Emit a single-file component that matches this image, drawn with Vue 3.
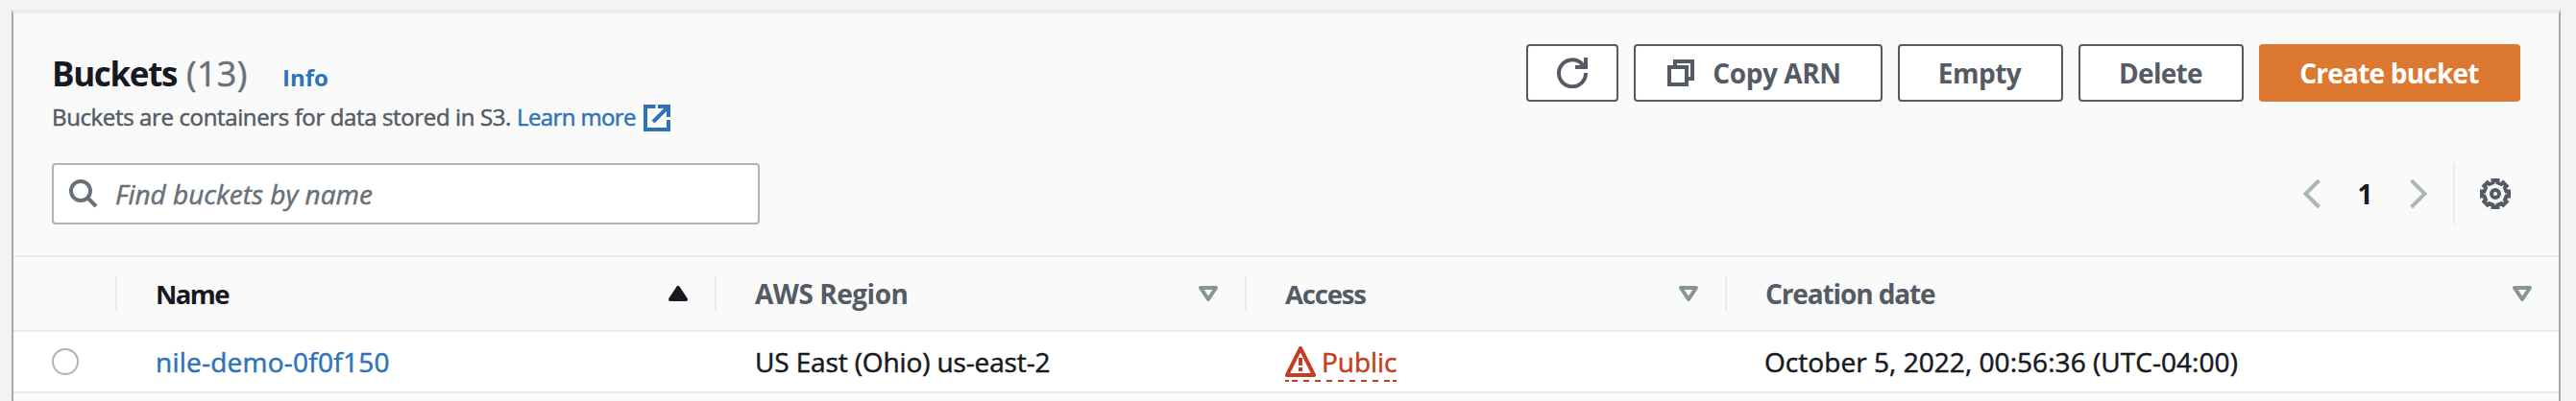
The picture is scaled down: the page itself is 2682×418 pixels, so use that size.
<script setup>
const columns = [
  { key: 'name', label: 'Name', sorted: true },
  { key: 'region', label: 'AWS Region' },
  { key: 'access', label: 'Access' },
  { key: 'created', label: 'Creation date' },
]
const buckets = [
  {
    name: 'nile-demo-0f0f150',
    region: 'US East (Ohio) us-east-2',
    access: 'Public',
    created: 'October 5, 2022, 00:56:36 (UTC-04:00)',
  },
]
</script>

<template>
  <main class="page">
    <section class="panel">
      <header class="header">
        <div class="titles">
          <div class="title-row">
            <h2 class="title">Buckets</h2>
            <span class="count">(13)</span>
            <a class="info">Info</a>
          </div>
          <p class="description">
            <span class="description-text">Buckets are containers for data stored in S3.</span>
            <a class="learn">Learn more</a>
            <svg class="external" viewBox="0 0 28 28" width="28" height="28">
              <path d="M12.500 2H2v24h24V16" />
              <path d="M15 2h11v11M25 3 10 18" />
            </svg>
          </p>
        </div>
        <div class="actions">
          <button class="btn refresh" aria-label="Refresh">
            <svg viewBox="0 0 32 32" width="32" height="32">
              <path d="M30 16A14 14 0 1 1 26 6.500L29 10" />
              <path d="M30 0v10H19" />
            </svg>
          </button>
          <button class="btn copy">
            <svg viewBox="0 0 28 28" width="28" height="28">
              <path d="M2 8h18v18H2z" />
              <path d="M8 8V2h18v18h-6" />
            </svg>
            <span class="copy-label">Copy ARN</span>
          </button>
          <button class="btn empty">Empty</button>
          <button class="btn delete">Delete</button>
          <button class="btn primary">Create bucket</button>
        </div>
      </header>

      <div class="tools">
        <div class="search">
          <svg viewBox="0 0 30 30" width="30" height="30">
            <circle cx="12" cy="12" r="10" />
            <path d="m19 19 9 9" />
          </svg>
          <span class="placeholder">Find buckets by name</span>
        </div>
        <div class="pager">
          <svg class="chevron" viewBox="0 0 18 30" width="18" height="30"><path d="M16.500 1 2.500 15l14 14" /></svg>
          <span class="page-number">1</span>
          <svg class="chevron next" viewBox="0 0 18 30" width="18" height="30"><path d="m1.500 1 14 14-14 14" /></svg>
          <span class="rule"></span>
          <svg class="gear" viewBox="0 0 32 32" width="32" height="32">
            <path d="M13.500 2h5v2.500l3.800 1.500 1.900-1.700 3.500 3.500L26 9.700l1.500 3.800H30v5h-2.500L26 22.300l1.700 1.900-3.500 3.500L22.300 26l-3.800 1.500V30h-5v-2.500L9.700 26l-1.900 1.700-3.500-3.500L6 22.300 4.500 18.500H2v-5h2.500L6 9.700 4.300 7.800l3.500-3.500L9.700 6l3.800-1.500z" />
            <circle cx="16" cy="16" r="4" />
          </svg>
        </div>
      </div>

      <div class="grid head">
        <div class="cell select"></div>
        <div v-for="c in columns" :key="c.key" class="cell" :class="[c.key, { sorted: c.sorted }]">
          <span class="label">{{ c.label }}</span>
          <svg class="sort" viewBox="0 0 20 16" width="20" height="16">
            <path v-if="c.sorted" class="solid" d="M10 2 18 14H2z" />
            <path v-else d="M2 2h16L10 14z" />
          </svg>
        </div>
      </div>
      <div v-for="b in buckets" :key="b.name" class="grid row">
        <div class="cell select"><span class="radio"></span></div>
        <div class="cell"><a class="bucket-name">{{ b.name }}</a></div>
        <div class="cell"><span class="bucket-region">{{ b.region }}</span></div>
        <div class="cell">
          <span class="access-status">
            <svg class="warning" viewBox="0 0 32 32" width="32" height="32">
              <path d="M16 2 30 30H2z" />
              <path class="mark" d="M16 12v8M16 22v4" />
            </svg>
            <span class="status-text">{{ b.access }}</span>
            <svg class="dashes" viewBox="0 0 116 2" width="116" height="2"><path d="M0 1h4M7 1h6M19 1h6M31 1h6M43 1h6M55 1h6M67 1h6M79 1h6M91 1h6M103 1h6M112 1h4" /></svg>
          </span>
        </div>
        <div class="cell"><span class="bucket-created">{{ b.created }}</span></div>
      </div>
    </section>
  </main>
</template>

<style>
body {
  background: #f2f3f3;
}
</style>

<style scoped>
.page {
  box-sizing: border-box;
  height: 418px;
  padding: 10px 16px 0 12px;
  overflow: hidden;
  background: #f2f4f4;
  font-family: "Open Sans", "Noto Sans", sans-serif;
  font-size: 28px;
  color: #16191f;
}
.count,
.description,
.placeholder,
.row {
  -webkit-text-stroke: 0.5px currentColor;
}
.panel {
  box-sizing: border-box;
  height: 420px;
  border: 2px solid #a4aaaf;
  border-top: 4px solid #eaeded;
  border-bottom: 0;
  background: #fafafa;
}
svg {
  display: block;
  flex: none;
  fill: none;
  stroke: currentColor;
  stroke-width: 4;
}
.header {
  display: flex;
  justify-content: space-between;
  height: 156px;
  padding: 32px 40px 0 40px;
  box-sizing: border-box;
}
.title-row {
  display: flex;
  align-items: baseline;
  height: 52px;
  line-height: 52px;
  margin-top: 5px;
}
.title {
  margin: 0;
  width: 140px;
  font-size: 35px;
  font-weight: 700;
  letter-spacing: -1.35px;
}
.count {
  width: 100px;
  font-size: 36px;
  letter-spacing: 0.3px;
  color: #687078;
}
.info {
  font-size: 24px;
  font-weight: 700;
  color: #2e73b8;
}
.description {
  display: flex;
  align-items: center;
  height: 36px;
  margin: 1px 0 0;
  font-size: 24px;
  line-height: 36px;
  color: #545b64;
}
.description-text {
  width: 484px;
  white-space: nowrap;
  letter-spacing: -0.37px;
}
.learn {
  width: 132px;
  color: #2e73b8;
  white-space: nowrap;
  letter-spacing: -0.62px;
}
.external {
  margin-top: 2px;
  color: #2e73b8;
}
.actions {
  display: flex;
  gap: 16px;
}
.btn {
  box-sizing: border-box;
  display: flex;
  align-items: center;
  justify-content: center;
  height: 60px;
  padding: 0;
  border: 2px solid #545b64;
  border-radius: 4px;
  background: #fff;
  color: #545b64;
  font-family: inherit;
  font-size: 28px;
  font-weight: 700;
  white-space: nowrap;
}
.refresh {
  width: 96px;
}
.copy {
  width: 259px;
  gap: 19px;
  padding-right: 8px;
  letter-spacing: -0.41px;
}
.empty {
  width: 172px;
  padding-right: 2px;
  letter-spacing: -0.5px;
}
.delete {
  width: 172px;
  padding-right: 1px;
  letter-spacing: -0.7px;
}
.primary {
  width: 272px;
  padding-right: 1px;
  border-color: #dd7831;
  background: #dd7831;
  color: #fff;
  letter-spacing: -0.78px;
}
.tools {
  display: flex;
  justify-content: space-between;
  align-items: flex-start;
  height: 96px;
  padding: 0 50px 0 40px;
}
.search {
  box-sizing: border-box;
  display: flex;
  align-items: center;
  gap: 18px;
  width: 737px;
  height: 64px;
  padding-left: 16px;
  border: 2px solid #aab7b8;
  border-radius: 4px;
  background: #fff;
  color: #687078;
}
.placeholder {
  font-style: italic;
}
.pager {
  display: flex;
  align-items: center;
  height: 64px;
}
.chevron {
  color: #aab7b8;
}
.page-number {
  width: 93px;
  text-align: center;
  font-weight: 700;
}
.rule {
  width: 2px;
  height: 64px;
  margin: 0 26px 0 27px;
  background: #eaeded;
}
.gear {
  color: #545b64;
}
.grid {
  display: grid;
  grid-template-columns: 108px 624px 552px 500px 1fr;
}
.head {
  box-sizing: border-box;
  height: 80px;
  border-top: 2px solid #eaeded;
  border-bottom: 2px solid #eaebeb;
  align-items: center;
  font-weight: 700;
  color: #545b64;
}
.cell {
  box-sizing: border-box;
  display: flex;
  align-items: center;
  padding-left: 40px;
}
.head .cell {
  justify-content: space-between;
  height: 38px;
  padding-right: 28px;
  border-right: 2px solid #eaeded;
}
.head .cell:last-child {
  border-right: 0;
}
.head .sorted {
  color: #16191f;
}
.name .label {
  font-size: 27.5px;
  letter-spacing: -1.6px;
}
.region .label {
  letter-spacing: -0.48px;
}
.access .label {
  font-size: 27.5px;
  letter-spacing: -1.2px;
}
.created .label {
  letter-spacing: -1.12px;
}
.sort {
  color: #879596;
  stroke-linejoin: round;
}
.sorted .sort {
  color: #16191f;
}
.solid {
  fill: currentColor;
}
.row {
  height: 62px;
  border-bottom: 2px solid #eaebeb;
  background: #fff;
}
.radio {
  box-sizing: border-box;
  width: 28px;
  height: 28px;
  border: 2px solid #aab7b8;
  border-radius: 50%;
}
.bucket-name {
  color: #2e73b8;
  letter-spacing: 0.24px;
}
.bucket-region {
  letter-spacing: -0.13px;
}
.bucket-created {
  margin-left: -1px;
  letter-spacing: 0.05px;
}
.access-status {
  position: relative;
  display: flex;
  align-items: center;
  gap: 6px;
  color: #c23f22;
}
.status-text {
  letter-spacing: -0.06px;
}
.warning {
  stroke-linejoin: round;
}
.dashes {
  position: absolute;
  left: 0;
  bottom: -2px;
  stroke-width: 2;
}
</style>
